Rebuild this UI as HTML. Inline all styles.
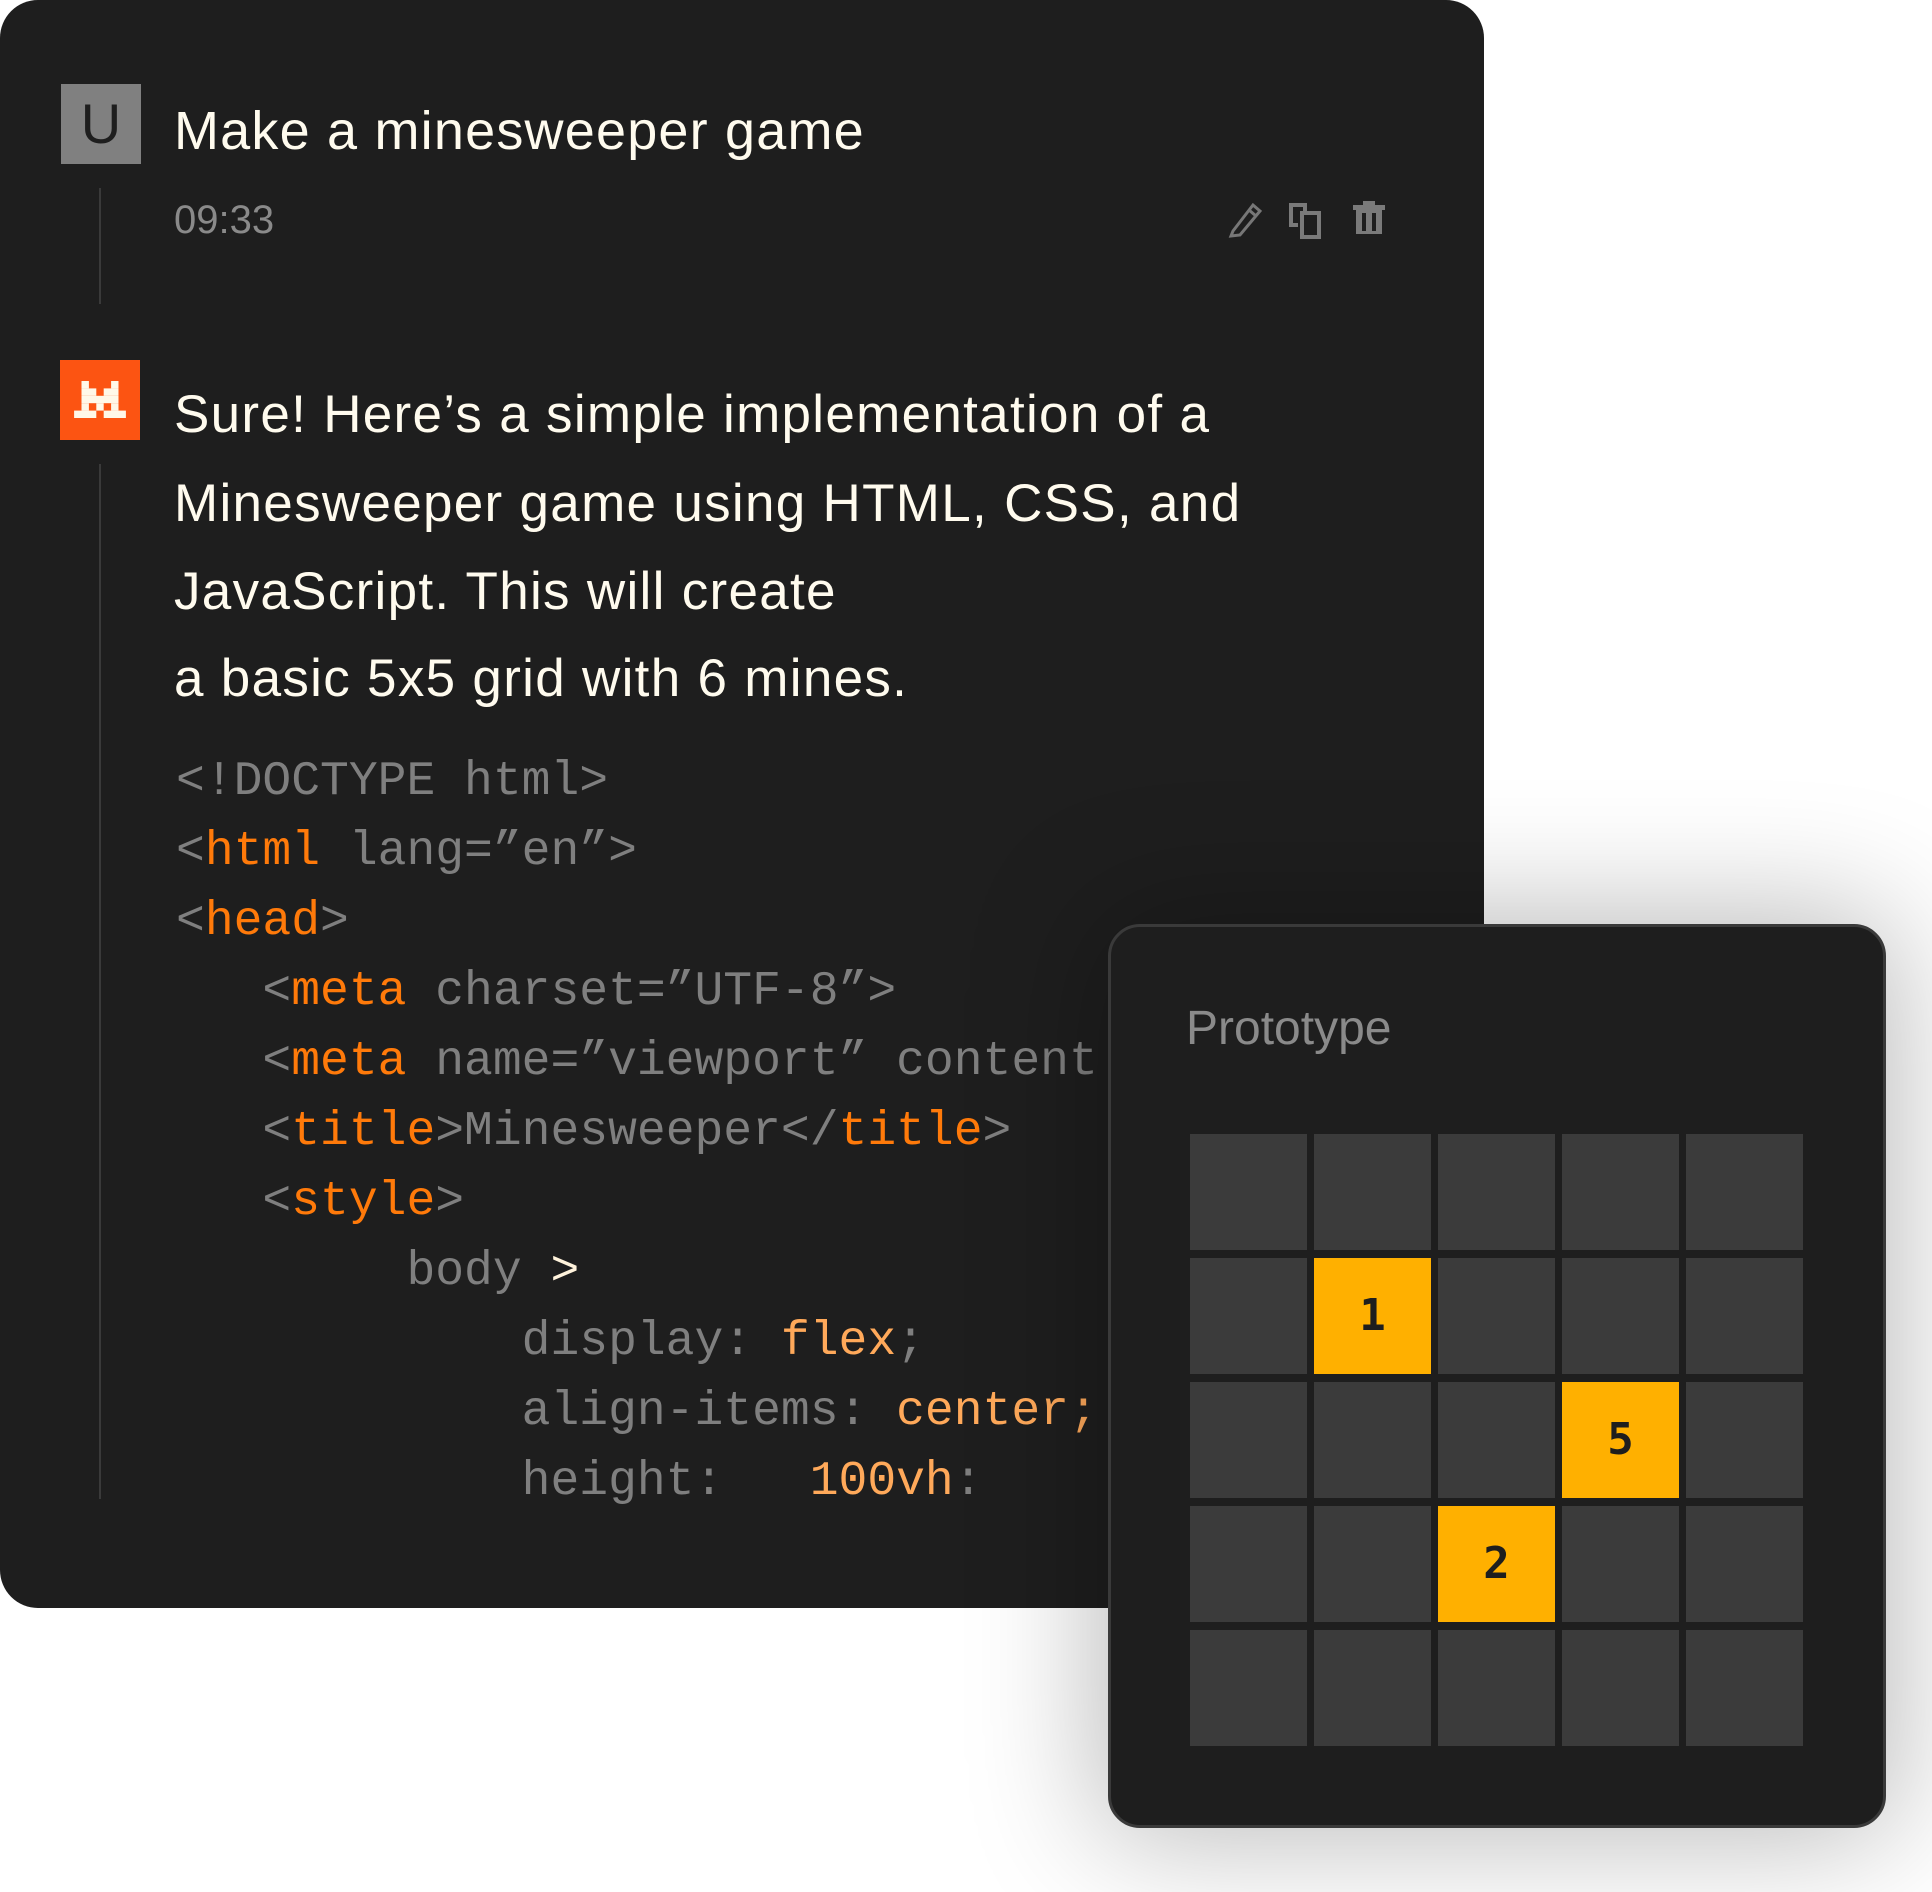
<!DOCTYPE html>
<html><head><meta charset="utf-8"><style>
html,body{margin:0;padding:0;background:#fff;width:1932px;height:1892px;overflow:hidden;position:relative}
.card{position:absolute;left:0;top:0;width:1484px;height:1608px;background:#1e1e1e;border-radius:38px}
.abs{position:absolute;white-space:pre}
.sans{font-family:"Liberation Sans",Arial,sans-serif}
.txt{color:#fffbee;font-size:53px;line-height:53px;letter-spacing:1.3px}
.code{font-family:"Liberation Mono",monospace;font-size:48px;line-height:70px;color:#7f7f7f;left:176px;top:747px;margin:0}
.o{color:#ff7a0a}.v{color:#ffa95a}.w{color:#fff3dc}
.vline{position:absolute;left:99px;width:2px;background:#3a3a3a}
.panel{position:absolute;left:1108px;top:924px;width:772px;height:898px;background:#1e1e1e;border:3px solid #3a3a3a;border-radius:32px;box-shadow:0 0 140px 10px rgba(0,0,0,0.28)}
.cell{position:absolute;width:117px;height:116px;background:#3b3b3b;font-family:"DejaVu Sans Mono","Liberation Mono",monospace;font-weight:bold;font-size:44px;color:#1e1e1e;text-align:center;line-height:116px}
.y{background:#ffb000}
</style></head><body>
<div class="card">
  <div class="abs sans" style="left:61px;top:84px;width:80px;height:80px;background:#808080;color:#1e1e1e;font-size:56px;line-height:80px;text-align:center">U</div>
  <div class="abs sans txt" style="left:174px;top:104px;font-size:54px;line-height:54px;letter-spacing:1.2px">Make a minesweeper game</div>
  <div class="vline" style="top:188px;height:116px"></div>
  <div class="abs sans" style="left:174px;top:200px;font-size:40px;line-height:40px;color:#8a8a8a">09:33</div>
  <svg class="abs" style="left:1225px;top:195px" width="190" height="45" viewBox="0 0 190 45">
    <g fill="none" stroke="#777" stroke-width="3">
      <path d="M8 36 L28 10 L35 16 L15 40 L6 41 Z M24 15 L31 21"/>
    </g>
    <g fill="none" stroke="#7a7a7a" stroke-width="4">
      <path d="M73 30 L66 30 L66 10 L80 10 L80 16"/>
      <rect x="77" y="18" width="17" height="24"/>
    </g>
    <g fill="#7a7a7a">
      <rect x="128" y="10" width="32" height="5"/><rect x="138" y="6" width="12" height="5"/>
      <rect x="131" y="15" width="26" height="24"/>
    </g>
    <g fill="#1e1e1e"><rect x="137" y="18" width="4" height="18"/><rect x="147" y="18" width="4" height="18"/></g>
  </svg>

  <div class="abs" style="left:60px;top:360px;width:80px;height:80px;background:#fc5412"></div>
  <svg class="abs" style="left:74.3px;top:381px" width="52" height="37" viewBox="0 0 7 5">
    <g fill="#fff8e8">
      <rect x="1" y="0" width="1" height="1"/><rect x="5" y="0" width="1" height="1"/>
      <rect x="1" y="1" width="2" height="1"/><rect x="4" y="1" width="2" height="1"/>
      <rect x="1" y="2" width="5" height="1"/>
      <rect x="1" y="3" width="1" height="1"/><rect x="3" y="3" width="1" height="1"/><rect x="5" y="3" width="1" height="1"/>
      <rect x="0" y="4" width="3" height="1"/><rect x="4" y="4" width="3" height="1"/>
    </g>
  </svg>
  <div class="vline" style="top:464px;height:1035px"></div>
  <div class="abs sans txt" style="left:174px;top:388px">Sure! Here’s a simple implementation of a</div>
  <div class="abs sans txt" style="left:174px;top:477px">Minesweeper game using HTML, CSS, and</div>
  <div class="abs sans txt" style="left:174px;top:565px">JavaScript. This will create</div>
  <div class="abs sans txt" style="left:174px;top:652px">a basic 5x5 grid with 6 mines.</div>
<pre class="abs code">&lt;!DOCTYPE html&gt;
&lt;<span class="o">html</span> lang=”en”&gt;
&lt;<span class="o">head</span>&gt;
   &lt;<span class="o">meta</span> charset=”UTF-8”&gt;
   &lt;<span class="o">meta</span> name=”viewport” content
   &lt;<span class="o">title</span>&gt;Minesweeper&lt;/<span class="o">title</span>&gt;
   &lt;<span class="o">style</span>&gt;
        body <span class="w">&gt;</span>
            display: <span class="v">flex</span>;
            align-items: <span class="v">center;</span>
            height:   <span class="v">100vh</span>:</pre>
</div>

<div class="panel">
  <div class="abs sans" style="left:75px;top:77px;font-size:48px;line-height:50px;color:#8a8a8a">Prototype</div>
</div>
<div style="position:absolute;left:1190px;top:1134px">
  <div class="cell" style="left:0;top:0"></div><div class="cell" style="left:124px;top:0"></div><div class="cell" style="left:248px;top:0"></div><div class="cell" style="left:372px;top:0"></div><div class="cell" style="left:496px;top:0"></div>
  <div class="cell" style="left:0;top:124px"></div><div class="cell y" style="left:124px;top:124px">1</div><div class="cell" style="left:248px;top:124px"></div><div class="cell" style="left:372px;top:124px"></div><div class="cell" style="left:496px;top:124px"></div>
  <div class="cell" style="left:0;top:248px"></div><div class="cell" style="left:124px;top:248px"></div><div class="cell" style="left:248px;top:248px"></div><div class="cell y" style="left:372px;top:248px">5</div><div class="cell" style="left:496px;top:248px"></div>
  <div class="cell" style="left:0;top:372px"></div><div class="cell" style="left:124px;top:372px"></div><div class="cell y" style="left:248px;top:372px">2</div><div class="cell" style="left:372px;top:372px"></div><div class="cell" style="left:496px;top:372px"></div>
  <div class="cell" style="left:0;top:496px"></div><div class="cell" style="left:124px;top:496px"></div><div class="cell" style="left:248px;top:496px"></div><div class="cell" style="left:372px;top:496px"></div><div class="cell" style="left:496px;top:496px"></div>
</div>
</body></html>
